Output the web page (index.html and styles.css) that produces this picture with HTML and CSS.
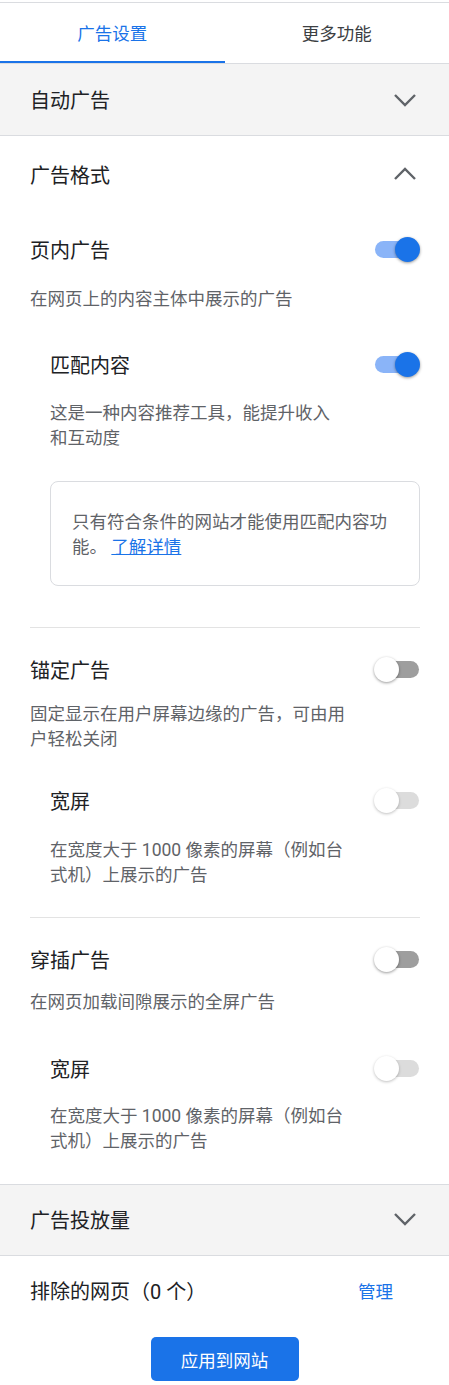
FILE: index.html
```html
<!DOCTYPE html>
<html lang="zh-CN">
<head>
    <meta charset="UTF-8" />
    <meta name="viewport" content="width=device-width, initial-scale=1.0"/>
    <title>广告设置</title>
    <link rel="stylesheet" href="styles.css">
</head>
<body>
    <div class="panel">
        <div class="tabs">
            <div class="tab active">广告设置</div>
            <div class="tab">更多功能</div>
        </div>

        <div class="section-head collapsed">
            <span>自动广告</span>
            <svg class="chevron" viewBox="0 0 24 24"><polyline points="2,7 12,17 22,7"/></svg>
        </div>

        <div class="section-head open">
            <span>广告格式</span>
            <svg class="chevron" viewBox="0 0 24 24"><polyline points="2,17 12,7 22,17"/></svg>
        </div>

        <div class="formats">
            <div class="setting s-inpage">
                <div class="setting-row">
                    <span class="setting-title">页内广告</span>
                    <span class="toggle on"></span>
                </div>
                <p class="desc">在网页上的内容主体中展示的广告</p>

                <div class="setting sub s-matched">
                    <div class="setting-row">
                        <span class="setting-title">匹配内容</span>
                        <span class="toggle on"></span>
                    </div>
                    <p class="desc">这是一种内容推荐工具，能提升收入和互动度</p>
                    <div class="notice">只有符合条件的网站才能使用匹配内容功能。 <a href="#">了解详情</a></div>
                </div>
            </div>

            <hr class="divider d-first">

            <div class="setting s-anchor">
                <div class="setting-row">
                    <span class="setting-title">锚定广告</span>
                    <span class="toggle"></span>
                </div>
                <p class="desc">固定显示在用户屏幕边缘的广告，可由用户轻松关闭</p>

                <div class="setting sub s-wide1">
                    <div class="setting-row">
                        <span class="setting-title">宽屏</span>
                        <span class="toggle disabled"></span>
                    </div>
                    <p class="desc">在宽度大于 1000 像素的屏幕（例如台式机）上展示的广告</p>
                </div>
            </div>

            <hr class="divider d-second">

            <div class="setting s-vignette">
                <div class="setting-row">
                    <span class="setting-title">穿插广告</span>
                    <span class="toggle"></span>
                </div>
                <p class="desc">在网页加载间隙展示的全屏广告</p>

                <div class="setting sub s-wide2">
                    <div class="setting-row">
                        <span class="setting-title">宽屏</span>
                        <span class="toggle disabled"></span>
                    </div>
                    <p class="desc">在宽度大于 1000 像素的屏幕（例如台式机）上展示的广告</p>
                </div>
            </div>
        </div>

        <div class="section-head collapsed load">
            <span>广告投放量</span>
            <svg class="chevron" viewBox="0 0 24 24"><polyline points="2,7 12,17 22,7"/></svg>
        </div>

        <div class="excluded">
            <span>排除的网页（0 个）</span>
            <a href="#" class="manage">管理</a>
        </div>

        <div class="actions">
            <button class="apply-btn">应用到网站</button>
        </div>
    </div>
</body>
</html>
```

FILE: styles.css
```css
:root {
    --blue: #1a73e8;
    --blue-light: #8ab4f8;
    --text: #202124;
    --text-muted: #5f6368;
    --line: #dadce0;
    --grey-bg: #f4f4f4;
}

body {
    margin: 0;
    font-family: Roboto, "Noto Sans CJK SC", sans-serif;
    color: var(--text);
    background: #fff;
}

.panel {
    width: 449px;
    margin-top: 2px;
    border-top: 1px solid var(--line);
}

/* tabs */
.tabs {
    display: flex;
    border-bottom: 1px solid var(--line);
}

.tab {
    flex: 1;
    height: 58px;
    display: flex;
    align-items: center;
    justify-content: center;
    font-size: 17.5px;
    color: #3c4043;
    border-bottom: 2px solid transparent;
}

.tab.active {
    color: var(--blue);
    border-bottom-color: var(--blue);
}

/* accordion headers */
.section-head {
    display: flex;
    align-items: center;
    justify-content: space-between;
    padding: 0 32px 0 30px;
    font-size: 20px;
    border-bottom: 1px solid var(--line);
}

.section-head.collapsed {
    height: 71px;
    background: var(--grey-bg);
}

.section-head.open {
    height: 76px;
    padding-bottom: 4px;
    border-bottom: none;
}

.section-head.load {
    height: 68px;
    padding-bottom: 2px;
    border-top: 1px solid var(--line);
}

.chevron {
    width: 24px;
    height: 24px;
}

.chevron polyline {
    fill: none;
    stroke: var(--text-muted);
    stroke-width: 2.4;
}

/* ad formats */
.formats {
    padding: 0 29px 30px 30px;
}

.setting-row {
    display: flex;
    align-items: center;
    justify-content: space-between;
    height: 30px;
}

.setting-title {
    font-size: 20px;
}

.desc {
    margin: 22px 0 0;
    max-width: 320px;
    font-size: 17.5px;
    line-height: 25px;
    color: var(--text-muted);
}

.sub {
    padding-left: 20px;
}

.sub .desc {
    max-width: 294px;
}

.s-inpage { margin-top: 18px; }
.s-inpage > .desc { margin-top: 23px; }
.s-matched { margin-top: 37px; }
.s-anchor { margin-top: 26px; }
.s-anchor > .desc { margin-top: 18px; }
.s-wide1 { margin-top: 33px; }
.s-wide1 .desc { margin-top: 23px; }
.s-vignette { margin-top: 26px; }
.s-vignette > .desc { margin-top: 16px; }
.s-wide2 { margin-top: 38px; }
.s-wide2 .desc { margin-top: 21px; }

.notice {
    margin-top: 30px;
    padding: 28px 21px 25px;
    border: 1px solid var(--line);
    border-radius: 8px;
    font-size: 17.5px;
    line-height: 25px;
    color: var(--text-muted);
}

.notice a {
    color: var(--blue);
}

.divider {
    margin: 0;
    border: none;
    border-top: 1px solid #e3e3e3;
}

.d-first { margin-top: 41px; }
.d-second { margin-top: 29px; }

/* switches */
.toggle {
    position: relative;
    width: 46px;
    height: 25px;
    flex-shrink: 0;
}

.toggle::before {
    content: "";
    position: absolute;
    left: 1px;
    right: 1px;
    top: 4px;
    height: 17px;
    border-radius: 9px;
    background: #9e9e9e;
}

.toggle::after {
    content: "";
    position: absolute;
    left: 0;
    top: 0;
    width: 25px;
    height: 25px;
    border-radius: 50%;
    background: #fff;
    box-shadow: 0 1px 3px rgba(0, 0, 0, 0.4);
}

.toggle.on::before {
    background: var(--blue-light);
}

.toggle.on::after {
    left: 21px;
    background: var(--blue);
}

.toggle.disabled::before {
    background: #dcdcdc;
}

.toggle.disabled::after {
    box-shadow: 0 1px 3px rgba(0, 0, 0, 0.25);
}

/* footer */
.excluded {
    display: flex;
    align-items: center;
    justify-content: space-between;
    height: 68px;
    padding: 0 56px 2px 30px;
    font-size: 20px;
}

.manage {
    font-size: 17.5px;
    color: var(--blue);
    text-decoration: none;
}

.actions {
    display: flex;
    justify-content: center;
    padding-top: 11px;
}

.apply-btn {
    width: 148px;
    height: 44px;
    border: none;
    border-radius: 5px;
    background: var(--blue);
    color: #fff;
    font-family: inherit;
    font-size: 17.5px;
}
```
